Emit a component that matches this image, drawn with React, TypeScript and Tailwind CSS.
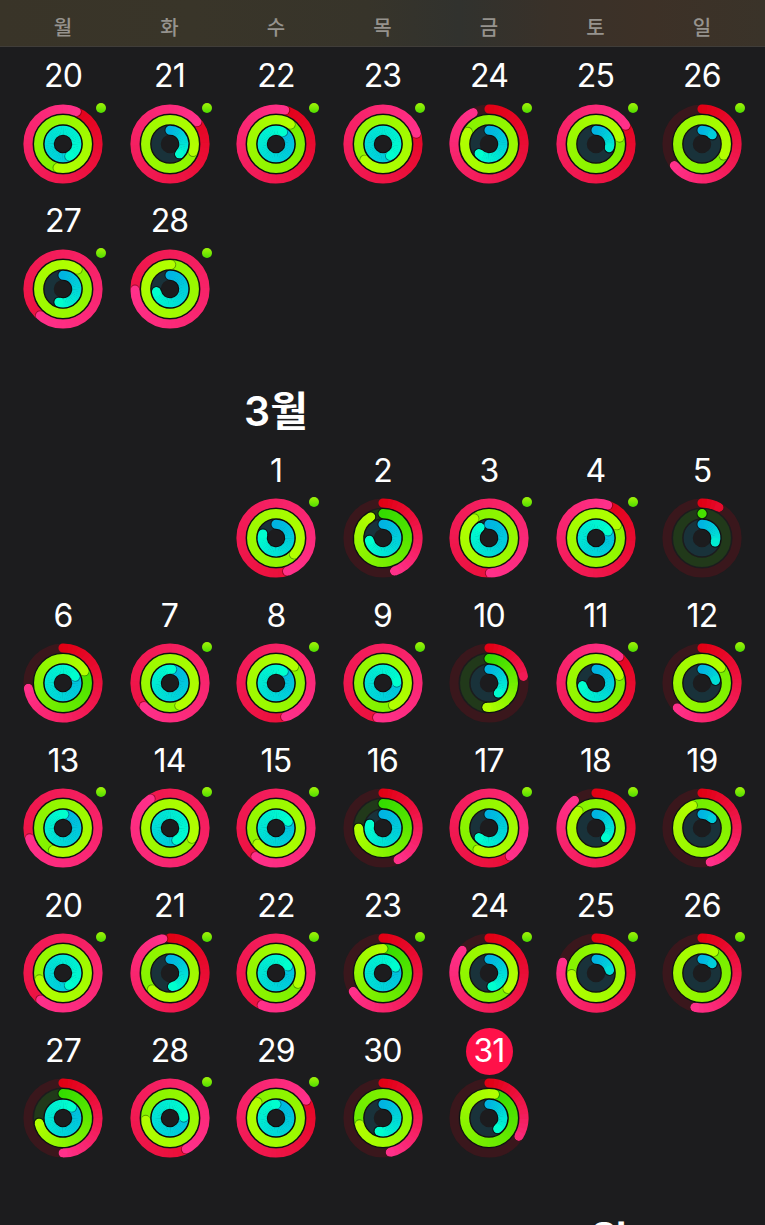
import { useId } from "react";

type Rgb = [number, number, number];

type Day = {
  day: number;
  // move, exercise, stand - in laps, 1 is a closed ring
  rings: [number, number, number];
  dot?: boolean;
  today?: boolean;
};

const weekdays = ["월", "화", "수", "목", "금", "토", "일"];

const february: (Day | null)[][] = [
  [
    { day: 20, rings: [1.062, 2.533, 1.42], dot: true },
    { day: 21, rings: [1.14, 3.3, 0.38], dot: true },
    { day: 22, rings: [1.04, 2.1, 1.08], dot: true },
    { day: 23, rings: [1.2, 3.635, 1.41], dot: true },
    { day: 24, rings: [0.926, 2.83, 0.63], dot: true },
    { day: 25, rings: [1.16, 2.205, 0.295], dot: true },
    { day: 26, rings: [0.645, 2.325, 0.136], dot: true },
  ],
  [
    { day: 27, rings: [1.612, 3.1, 0.55], dot: true },
    { day: 28, rings: [1.745, 4.005, 0.72], dot: true },
    null,
    null,
    null,
    null,
    null,
  ],
];

const march: (Day | null)[][] = [
  [
    null,
    null,
    { day: 1, rings: [1.447, 3.365, 0.8], dot: true },
    { day: 2, rings: [0.447, 0.917, 0.725] },
    { day: 3, rings: [1.494, 2.895, 0.89], dot: true },
    { day: 4, rings: [1.054, 3.16, 1.165], dot: true },
    { day: 5, rings: [0.081, 0.001, 0.3] },
  ],
  [
    { day: 6, rings: [0.726, 1.168, 1.17] },
    { day: 7, rings: [1.633, 3.435, 1.02], dot: true },
    { day: 8, rings: [1.456, 3.13, 1.09], dot: true },
    { day: 9, rings: [1.525, 2.43, 1.24], dot: true },
    { day: 10, rings: [0.22, 0.515, 0.383] },
    { day: 11, rings: [1.114, 2.2, 0.72], dot: true },
    { day: 12, rings: [0.625, 2.14, 0.22], dot: true },
  ],
  [
    { day: 13, rings: [1.7, 2.565, 1.01], dot: true },
    { day: 14, rings: [1.905, 4.32, 1.42], dot: true },
    { day: 15, rings: [1.598, 3.635, 1.17], dot: true },
    { day: 16, rings: [0.43, 0.75, 0.797] },
    { day: 17, rings: [1.397, 2.575, 0.63], dot: true },
    { day: 18, rings: [0.895, 2.87, 0.38], dot: true },
    { day: 19, rings: [0.463, 1.936, 0.133], dot: true },
  ],
  [
    { day: 20, rings: [1.61, 3.705, 1.425], dot: true },
    { day: 21, rings: [0.967, 2.63, 0.472], dot: true },
    { day: 22, rings: [1.565, 2.32, 1.165], dot: true },
    { day: 23, rings: [0.662, 1.0, 1.18], dot: true },
    { day: 24, rings: [0.862, 2.36, 0.468], dot: true },
    { day: 25, rings: [0.8, 2.74, 0.22], dot: true },
    { day: 26, rings: [0.533, 2.08, 0.135], dot: true },
  ],
  [
    { day: 27, rings: [0.5, 0.717, 1.108] },
    { day: 28, rings: [1.423, 2.735, 1.24], dot: true },
    { day: 29, rings: [1.165, 2.86, 1.0], dot: true },
    { day: 30, rings: [0.467, 1.705, 0.547] },
    { day: 31, rings: [0.338, 1.036, 0.393], today: true },
    null,
    null,
  ],
];

const STROKE = 9.1;
const CENTER = 40;

const ringStyles: { radius: number; track: string; from: Rgb; to: Rgb }[] = [
  { radius: 35.05, track: "#3a171c", from: [225, 0, 20], to: [255, 48, 138] },
  { radius: 24.4, track: "#21391a", from: [52, 220, 0], to: [178, 255, 0] },
  { radius: 13.8, track: "#19323a", from: [0, 180, 226], to: [0, 255, 206] },
];

const pointAt = (turn: number, radius: number) => {
  const angle = turn * 2 * Math.PI;
  return [CENTER + radius * Math.sin(angle), CENTER - radius * Math.cos(angle)];
};

const mix = (from: Rgb, to: Rgb, t: number) =>
  `rgb(${from.map((c, i) => Math.round(c + (to[i] - c) * t)).join(",")})`;

const arc = (start: number, end: number, radius: number) => {
  const [x1, y1] = pointAt(start, radius);
  const [x2, y2] = pointAt(end, radius);
  return `M${x1.toFixed(3)} ${y1.toFixed(3)}A${radius} ${radius} 0 ${end - start > 0.5 ? 1 : 0} 1 ${x2.toFixed(3)} ${y2.toFixed(3)}`;
};

const Ring = ({ value, index }: { value: number; index: number }) => {
  const maskId = useId();
  const { radius, track, from, to } = ringStyles[index];
  const start = Math.max(0, value - 1);
  const length = value - start;
  const closed = length > 0.99;
  const count = Math.max(1, Math.round(length * 48));
  const [startX, startY] = pointAt(start, radius);
  const [endX, endY] = pointAt(value, radius);
  const [shadowX, shadowY] = pointAt(value + 0.95 / (2 * Math.PI * radius), radius);
  // short arcs have not reached the final colour yet
  const scale = value < 0.4 ? Math.max(value / 0.4, 0.15) : 1;
  const color = (turn: number) => mix(from, to, (turn / value) * scale);

  const outline = (stroke: string, width: number, opacity = 1) =>
    closed ? (
      <circle cx={CENTER} cy={CENTER} r={radius} fill="none" stroke={stroke} strokeWidth={width} strokeOpacity={opacity} />
    ) : (
      <path
        d={arc(start, value, radius)}
        fill="none"
        stroke={stroke}
        strokeWidth={width}
        strokeOpacity={opacity}
        strokeLinecap="round"
      />
    );

  return (
    <g fill="none">
      <circle cx={CENTER} cy={CENTER} r={radius} stroke={track} strokeWidth={STROKE} />
      {index > 0 && outline("#000", STROKE + 2, 0.5)}
      <mask id={maskId} maskUnits="userSpaceOnUse" x={0} y={0} width={80} height={80}>
        {outline("#fff", STROKE)}
      </mask>
      {/* the segments are wider than the ring, the mask gives it a clean edge */}
      <g mask={`url(#${maskId})`} strokeWidth={STROKE + 3}>
        {!closed && <circle cx={startX} cy={startY} r={STROKE / 2 + 1} fill={color(start)} />}
        {Array.from({ length: count }, (_, i) => {
          const a = start + (length * i) / count;
          const b = start + (length * (i + 1)) / count;
          return (
            <path
              key={i}
              d={arc(a, i === count - 1 ? b : b + 0.006, radius)}
              stroke={color((a + b) / 2)}
            />
          );
        })}
        {value > 0.95 && <circle cx={shadowX} cy={shadowY} r={STROKE / 2} fill="#000" fillOpacity={0.36} />}
        <circle cx={endX} cy={endY} r={STROKE / 2} fill={color(value)} />
      </g>
    </g>
  );
};

const DayCell = ({ item }: { item: Day | null }) => {
  if (!item) return <div />;

  return (
    <div className="flex flex-col items-center">
      <div className="flex h-[56.5px] items-center justify-center pt-[3.5px]">
        <span
          className={`flex size-[47px] items-center justify-center rounded-full pb-[2px] text-[32px] leading-none tracking-[-0.8px] text-white ${
            item.today ? "bg-[#ff1149]" : ""
          }`}
        >
          {item.day}
        </span>
      </div>
      <div className="relative size-20">
        <svg viewBox="0 0 80 80" className="size-20">
          {item.rings.map((value, i) => (
            <Ring key={i} value={value} index={i} />
          ))}
        </svg>
        {item.dot && (
          <span className="absolute -top-[1px] -right-[2.5px] size-[10px] rounded-full bg-linear-to-b from-[#a0f408] to-[#4bdc00]" />
        )}
      </div>
    </div>
  );
};

const Weeks = ({ weeks }: { weeks: (Day | null)[][] }) => (
  <>
    {weeks.map((week, i) => (
      <div key={i} className="grid h-[145px] grid-cols-7 px-[9.75px]">
        {week.map((item, j) => (
          <DayCell key={j} item={item} />
        ))}
      </div>
    ))}
  </>
);

const MonthTitle = ({ label, column }: { label: string; column: string }) => (
  <div className="grid h-[104.6px] grid-cols-7 px-[9.75px] pt-[50px]">
    <h2 className={`text-center text-[41px] leading-[48px] font-semibold whitespace-nowrap text-white ${column}`}>
      {label}
    </h2>
  </div>
);

const App = () => {
  return (
    <div className="h-[1225px] w-[765px] overflow-hidden bg-[#1c1c1e] font-['Inter','Noto_Sans_CJK_KR',sans-serif]">
      <header className="grid h-[47px] grid-cols-7 border-b border-[#403d39] bg-[linear-gradient(90deg,#393428_0%,#393529_25%,#37342a_48%,#31322e_60%,#393129_72%,#3d3127_85%,#3a3329_100%)] px-[9.75px] pt-[8px]">
        {weekdays.map((name) => (
          <span key={name} className="text-center text-[20px] leading-[40px] font-medium text-[#96938e]">
            {name}
          </span>
        ))}
      </header>

      <Weeks weeks={february} />
      <MonthTitle label="3월" column="col-start-3" />
      <Weeks weeks={march} />
      <MonthTitle label="4월" column="col-start-6" />
    </div>
  );
};

export default App;
